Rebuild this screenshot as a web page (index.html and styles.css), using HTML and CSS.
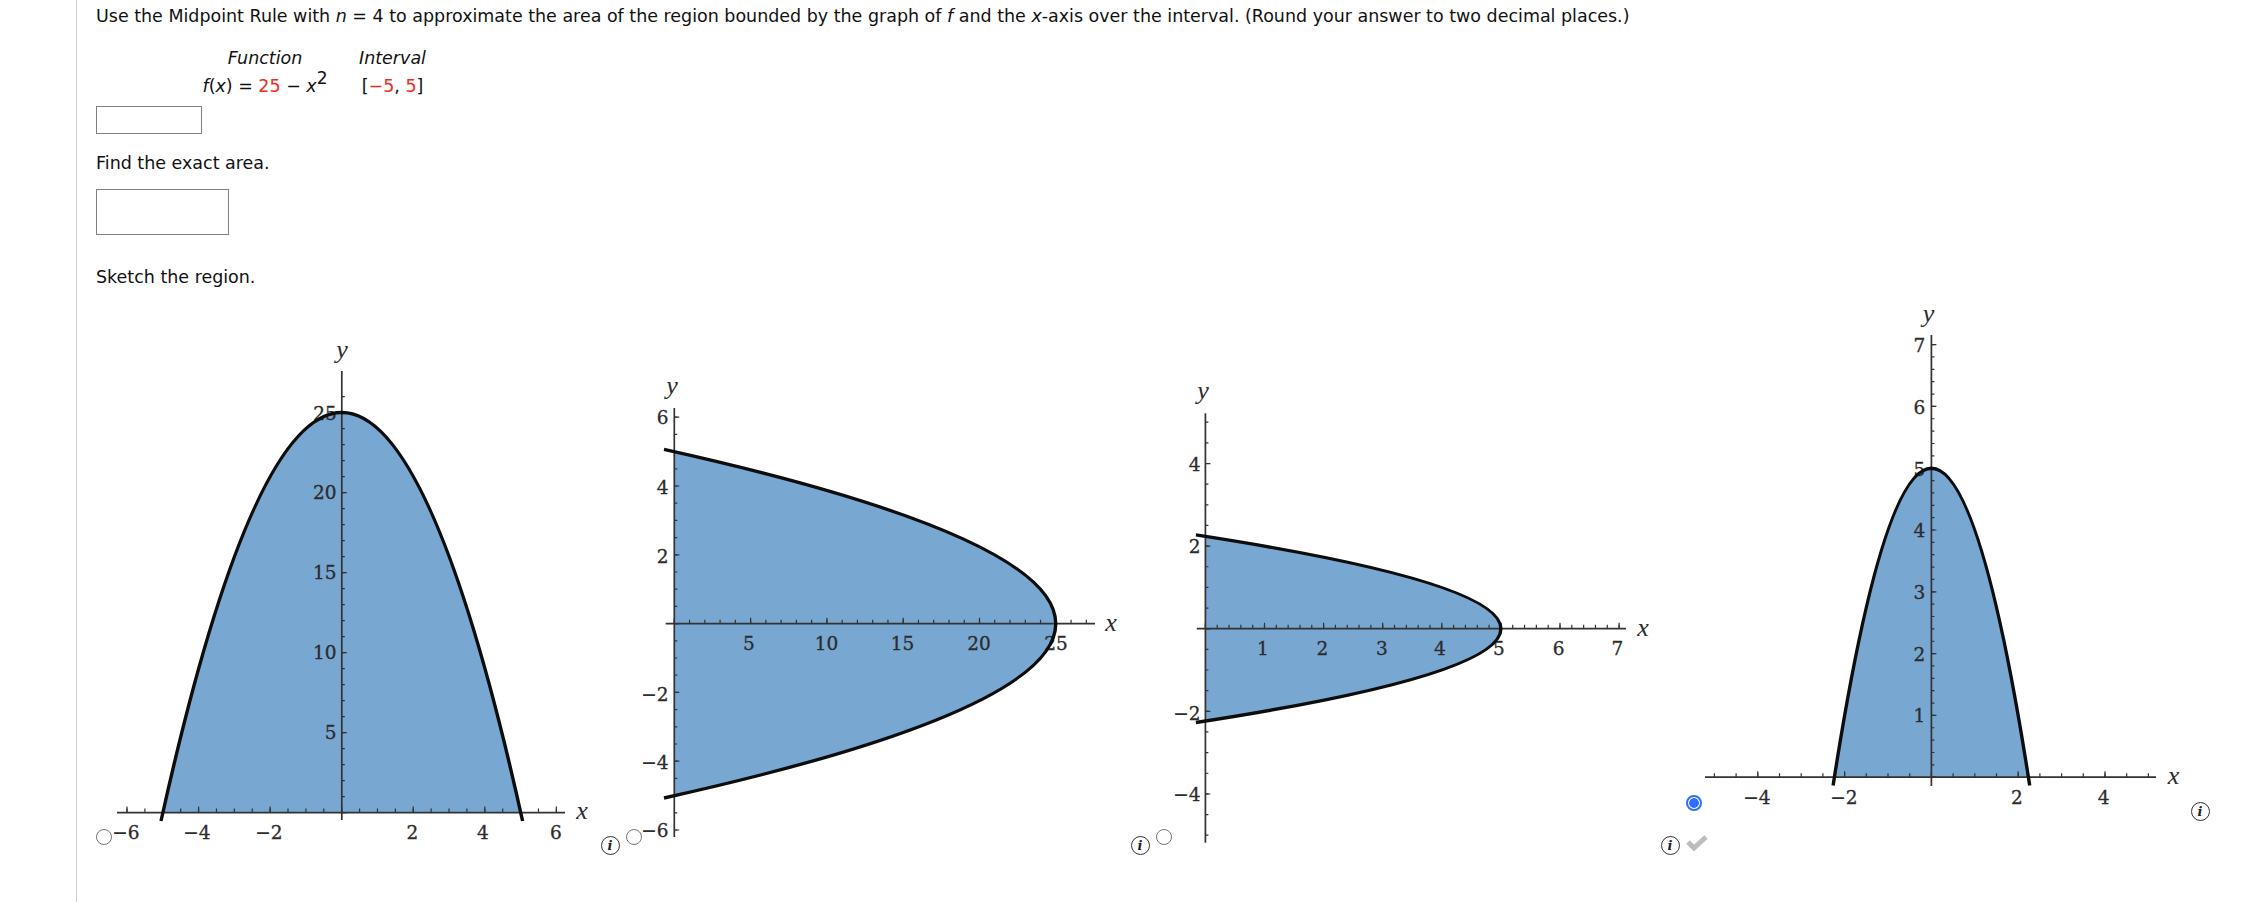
FILE: index.html
```html
<!DOCTYPE html>
<html lang="en">
<head>
<meta charset="utf-8">
<title>Midpoint Rule</title>
<link rel="stylesheet" href="styles.css">
</head>
<body>
<main class="sheet">
  <p class="line first">Use the Midpoint Rule with <i>n</i> = 4 to approximate the area of the region bounded by the graph of <i>f</i> and the <i>x</i>-axis over the interval. (Round your answer to two decimal places.)</p>
  <div class="fn-table">
    <i>Function</i><i>Interval</i>
    <span><i>f</i>(<i>x</i>) = <span class="red">25</span> − <i>x</i><sup class="pow">2</sup></span>
    <span>[<span class="red">−5</span>, <span class="red">5</span>]</span>
  </div>
  <div class="answer small"></div>
  <p class="line find">Find the exact area.</p>
  <div class="answer large"></div>
  <p class="line sketch">Sketch the region.</p>

  <div class="options">
    <div class="option">
      <div class="pick low"><span class="radio"></span></div>
      <svg class="plot" viewBox="112 290 487 560">
        <path class="fill" d="M162.9 812.6Q341.8 12.6 520.7 812.6Z"/>
        <text class="num" x="325" y="420.4" text-anchor="middle">25</text>
        <g class="num end">
          <text x="336.5" y="499.4">20</text><text x="336.5" y="579.2">15</text><text x="336.5" y="659">10</text><text x="336.5" y="739">5</text>
        </g>
        <g class="num mid">
          <text x="126" y="839.4">−6</text><text x="197" y="839.4">−4</text><text x="269" y="839.4">−2</text><text x="412.5" y="839.4">2</text><text x="483" y="839.4">4</text><text x="556" y="839.4">6</text>
        </g>
        <path class="axis" d="M117 812.6H565M341.8 371V820"/>
        <path class="tick" stroke-width="4" stroke-dasharray="1.2 16.69" d="M126.4 810.6H557"/>
        <path class="tick" stroke-width="6" stroke-dasharray="1.2 70.36" d="M126.4 809.6H557"/>
        <path class="tick" stroke-width="3" stroke-dasharray="1.2 14.8" d="M343.3 813.2V396"/>
        <path class="tick" stroke-width="5" stroke-dasharray="1.2 78.8" d="M344.3 813.2V396"/>
        <path class="curve" d="M161 821Q341.8 4.1 522.6 821"/>
        <text class="var" x="342" y="358">y</text>
        <text class="var" x="582" y="819">x</text>
      </svg>
      <span class="info low">i</span>
    </div>

    <div class="option">
      <div class="pick low"><span class="radio"></span></div>
      <svg class="plot" viewBox="642 290 487 560">
        <path class="fill" d="M674.3 451.7Q1437.3 623.7 674.3 795.7Z"/>
        <g class="num mid">
          <text x="749" y="650">5</text><text x="826.5" y="650">10</text><text x="902.5" y="650">15</text><text x="979" y="650">20</text><text x="1056" y="650">25</text>
        </g>
        <g class="num end">
          <text x="668.6" y="424.4">6</text><text x="668.6" y="493.7">4</text><text x="668.6" y="563">2</text><text x="668.6" y="701.4">−2</text><text x="668.6" y="769">−4</text><text x="668.6" y="837.4">−6</text>
        </g>
        <path class="axis" d="M665.7 623.7H1095M674.3 408V837"/>
        <path class="tick" stroke-width="4" stroke-dasharray="1.2 14.06" d="M673.7 621.7H1090"/>
        <path class="tick" stroke-width="6" stroke-dasharray="1.2 75.1" d="M673.7 620.7H1090"/>
        <path class="tick" stroke-width="3" stroke-dasharray="1.2 16" d="M675.8 830.6V416"/>
        <path class="tick" stroke-width="5" stroke-dasharray="1.2 67.6" d="M676.8 830.6V416"/>
        <path class="curve" d="M664 449.4Q1447.5 623.7 664 798"/>
        <text class="var" x="672" y="394">y</text>
        <text class="var" x="1111" y="631">x</text>
      </svg>
      <span class="info low">i</span>
    </div>

    <div class="option">
      <div class="pick low"><span class="radio"></span></div>
      <svg class="plot" viewBox="1172 290 487 560">
        <path class="fill" d="M1205.4 536.35Q1796.4 628.7 1205.4 721.05Z"/>
        <g class="num mid">
          <text x="1263" y="654.7">1</text><text x="1322.5" y="654.7">2</text><text x="1381.8" y="654.7">3</text><text x="1440" y="654.7">4</text><text x="1499" y="654.7">5</text><text x="1558.6" y="654.7">6</text><text x="1617.5" y="654.7">7</text>
        </g>
        <g class="num end">
          <text x="1200.5" y="471">4</text><text x="1200.5" y="553.4">2</text><text x="1200.5" y="719.7">−2</text><text x="1200.5" y="801.4">−4</text>
        </g>
        <path class="axis" d="M1196.8 628.7H1626M1205.4 413.3V842.7"/>
        <path class="tick" stroke-width="4" stroke-dasharray="1.2 10.62" d="M1204.8 626.7H1620"/>
        <path class="tick" stroke-width="6" stroke-dasharray="1.2 57.9" d="M1204.8 625.7H1620"/>
        <path class="tick" stroke-width="3" stroke-dasharray="1.2 19.45" d="M1206.9 835.8V421"/>
        <path class="tick" stroke-width="5" stroke-dasharray="1.2 81.4" d="M1207.9 794.6V462"/>
        <path class="curve" d="M1195.9 534.9Q1805.9 628.7 1195.9 722.5"/>
        <text class="var" x="1203" y="399">y</text>
        <text class="var" x="1643" y="636">x</text>
      </svg>
      <span class="info low">i</span>
    </div>

    <div class="option">
      <div class="pick high">
        <span class="radio selected"></span>
        <svg class="check" viewBox="0 0 24 20"><path d="M2 9L8 15L20 4"/></svg>
      </div>
      <svg class="plot" viewBox="1702 290 487 560">
        <path class="fill" d="M1834.35 777.2Q1931.4 159.2 2028.45 777.2Z"/>
        <g class="num end">
          <text x="1925.4" y="352.4">7</text><text x="1925.4" y="413.7">6</text><text x="1925.4" y="476">5</text><text x="1925.4" y="537">4</text><text x="1925.4" y="598.7">3</text><text x="1925.4" y="660.7">2</text><text x="1925.4" y="722.4">1</text>
        </g>
        <g class="num mid">
          <text x="1757" y="804">−4</text><text x="1844" y="804">−2</text><text x="2017" y="804">2</text><text x="2103.6" y="804">4</text>
        </g>
        <path class="axis" d="M1705 777.2H2156M1931.4 335V786"/>
        <path class="tick" stroke-width="4" stroke-dasharray="1.2 20.5" d="M1713.8 775.2H2150"/>
        <path class="tick" stroke-width="6" stroke-dasharray="1.2 85.6" d="M1757.2 774.2H2107"/>
        <path class="tick" stroke-width="3" stroke-dasharray="1.2 11.16" d="M1932.9 777.8V344"/>
        <path class="tick" stroke-width="5" stroke-dasharray="1.2 60.6" d="M1933.9 777.8V344"/>
        <path class="curve" d="M1833.1 785.5Q1931.4 150.9 2029.7 785.5"/>
        <text class="var" x="1928.4" y="322">y</text>
        <text class="var" x="2173.5" y="784">x</text>
      </svg>
      <span class="info high">i</span>
    </div>
  </div>
</main>
</body>
</html>
```

FILE: styles.css
```css
html, body {
  margin: 0;
  padding: 0;
  background: #fff;
}

.sheet {
  margin-left: 76px;
  padding-left: 19px;
  border-left: 1px solid #cfcfcf;
  min-height: 902px;
  box-sizing: border-box;
  overflow: hidden;
  font-family: "DejaVu Sans", Verdana, sans-serif;
  font-size: 17.48px;
  color: #111;
}

.line {
  margin: 0;
  line-height: 24px;
  white-space: nowrap;
}
.first { padding-top: 4px; }
.find { margin-top: 17px; }
.sketch { margin-top: 30px; }

.fn-table {
  display: grid;
  grid-template-columns: 128px 67px;
  column-gap: 30px;
  row-gap: 4px;
  justify-items: center;
  width: max-content;
  margin: 18px 0 0 105px;
  line-height: 24px;
  white-space: nowrap;
}
.red { color: #f02c20; }
.pow {
  font-size: 17px;
  line-height: 0;
  vertical-align: 8px;
}

.answer {
  box-sizing: border-box;
  border: 1px solid #808080;
  background: #fff;
}
.small { width: 106px; height: 28px; margin-top: 8px; }
.large { width: 133px; height: 46px; margin-top: 14px; }

.options {
  display: flex;
  margin-top: 1px;
}
.option {
  display: flex;
  flex: none;
  width: 530px;
  height: 560px;
}

.pick {
  display: flex;
  flex-direction: column;
  flex: none;
  width: 16px;
}
.pick.low { padding-top: 539px; }
.pick.high { padding-top: 505px; }

.radio {
  display: block;
  flex: none;
  box-sizing: border-box;
  width: 16px;
  height: 16px;
  border: 1px solid #767676;
  border-radius: 50%;
  background: #fff;
}
.radio.selected {
  border: 2px solid #2f6fff;
  background: radial-gradient(circle, #2f6fff 0 4.5px, #fff 5.2px);
}

.check {
  flex: none;
  width: 24px;
  height: 20px;
  margin-top: 22px;
}
.check path {
  fill: none;
  stroke: #bdbdbd;
  stroke-width: 5;
}

.plot {
  flex: none;
  width: 487px;
  height: 560px;
  overflow: visible;
}
.fill { fill: #78a7d2; }
.curve {
  fill: none;
  stroke: #0d0d0d;
  stroke-width: 3.4;
}
.axis {
  fill: none;
  stroke: #333;
  stroke-width: 1.7;
}
.tick {
  fill: none;
  stroke: #333;
}
.num {
  font-family: "DejaVu Serif", serif;
  font-size: 18.5px;
  fill: #2c2c2c;
  stroke: #2c2c2c;
  stroke-width: 0.3;
}
.end { text-anchor: end; }
.mid { text-anchor: middle; }
.var {
  font-family: "Liberation Serif", serif;
  font-style: italic;
  font-size: 26px;
  text-anchor: middle;
  fill: #2c2c2c;
}

.info {
  display: flex;
  flex: none;
  align-items: center;
  justify-content: center;
  box-sizing: border-box;
  width: 19px;
  height: 19px;
  margin-left: 1.5px;
  border: 1px solid #333;
  border-radius: 50%;
  font-family: "DejaVu Serif", serif;
  font-style: italic;
  font-weight: bold;
  font-size: 13px;
  line-height: 1;
  color: #222;
}
.info.low { margin-top: 546px; }
.info.high { margin-top: 511.5px; }
```
